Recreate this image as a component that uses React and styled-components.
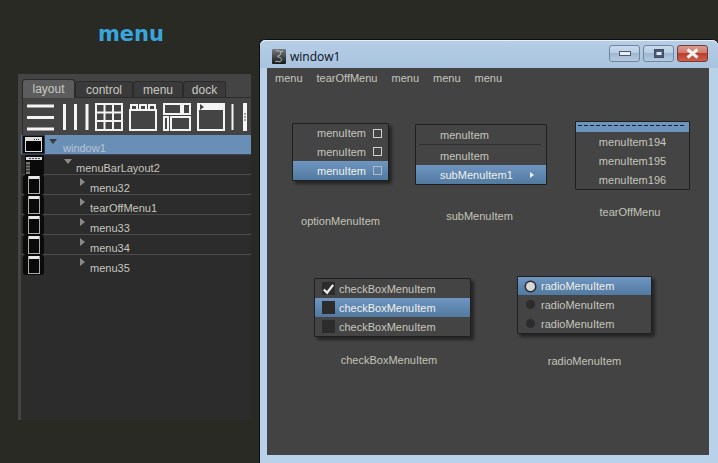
import React from 'react';
import styled, { createGlobalStyle } from 'styled-components';

const GlobalStyle = createGlobalStyle`
  html, body {
    margin: 0;
    padding: 0;
    background: #2a2a25;
    overflow: hidden;
  }
`;

const uiFont = `"Liberation Sans", Arial, sans-serif`;

export default function App() {
  return (
    <>
      <GlobalStyle />
      <Page>
        <LeftColumn>
          <Title>menu</Title>
          <Panel>
            <PanelHead>
              <Tabs>
                <Tab $active>layout</Tab>
                <Tab $w={58}>control</Tab>
                <Tab $w={50}>menu</Tab>
                <Tab $w={43}>dock</Tab>
              </Tabs>
              <Toolbar>
                <ToolRows />
                <ToolColumns />
                <ToolGrid />
                <ToolTabs />
                <ToolForm />
                <ToolFrame />
                <ToolPane />
              </Toolbar>
            </PanelHead>
            <Tree>
              <TreeRow $selected>
                <WindowIcon />
                <Arrow $open $x={4} $after={6} $dark />
                <TreeLabel $dim>window1</TreeLabel>
              </TreeRow>
              <TreeRow>
                <MenuBarIcon />
                <Arrow $open $x={19} $after={4} />
                <TreeLabel>menuBarLayout2</TreeLabel>
              </TreeRow>
              {['menu32', 'tearOffMenu1', 'menu33', 'menu34', 'menu35'].map((name, i) => (
                <TreeRow key={name} $last={i === 4}>
                  <MenuIcon />
                  <Arrow $x={35} $after={5} />
                  <TreeLabel>{name}</TreeLabel>
                </TreeRow>
              ))}
            </Tree>
          </Panel>
        </LeftColumn>

        <Window>
          <TitleBar>
            <AppIcon />
            <WindowTitle>window1</WindowTitle>
            <Controls>
              <Control>
                <svg width="12" height="6" viewBox="0 0 12 6">
                  <rect x="0.5" y="0.5" width="11" height="4" fill="#e8eef5" stroke="#4a5a72" />
                </svg>
              </Control>
              <Control>
                <svg width="12" height="10" viewBox="0 0 12 10">
                  <rect x="1.5" y="0.5" width="9" height="8" fill="#4a5a78" stroke="#3c4a62" />
                  <rect x="3.5" y="3" width="5" height="3" fill="#dfe7f0" />
                </svg>
              </Control>
              <Control $close>
                <svg width="15" height="11" viewBox="0 0 15 11">
                  <path d="M2.5 1.5 L12.5 9.5 M12.5 1.5 L2.5 9.5" stroke="#f2f2f2" strokeWidth="3" />
                </svg>
              </Control>
            </Controls>
          </TitleBar>
          <Client>
            <MenuBar>
              <MenuBarItem>menu</MenuBarItem>
              <MenuBarItem>tearOffMenu</MenuBarItem>
              <MenuBarItem>menu</MenuBarItem>
              <MenuBarItem>menu</MenuBarItem>
              <MenuBarItem>menu</MenuBarItem>
            </MenuBar>

            <DemoRow $top={35}>
              <Demo $w={97} $left={25} $gap={33}>
                <Popup>
                  <OptionItem>menuItem<OptionBox /></OptionItem>
                  <OptionItem>menuItem<OptionBox /></OptionItem>
                  <OptionItem $on>menuItem<OptionBox $faded /></OptionItem>
                </Popup>
                <Caption>optionMenuItem</Caption>
              </Demo>
              <Demo $w={132} $left={26} $gap={24} $down={1} $nudge={3}>
                <Popup $flat>
                  <SubItem>menuItem</SubItem>
                  <Divider />
                  <SubItem>menuItem</SubItem>
                  <SubItem $on>
                    subMenuItem1
                    <SubArrow />
                  </SubItem>
                </Popup>
                <Caption>subMenuItem</Caption>
              </Demo>
              <Demo $w={115} $left={28} $gap={15} $down={-2} $nudge={5}>
                <Popup $flat>
                  <TearStrip />
                  <TearItem>menuItem194</TearItem>
                  <TearItem>menuItem195</TearItem>
                  <TearItem>menuItem196</TearItem>
                </Popup>
                <Caption>tearOffMenu</Caption>
              </Demo>
            </DemoRow>

            <DemoRow $top={48}>
              <Demo $w={157} $left={47} $gap={16} $down={2} $nudge={7}>
                <Popup>
                  <CheckItem>
                    <CheckBox>
                      <svg width="14" height="12" viewBox="0 0 14 12">
                        <path d="M2 6.5 L5.5 10 L12 1.5" fill="none" stroke="#eee" strokeWidth="2.4" />
                      </svg>
                    </CheckBox>
                    checkBoxMenuItem
                  </CheckItem>
                  <CheckItem $on><CheckBox />checkBoxMenuItem</CheckItem>
                  <CheckItem><CheckBox />checkBoxMenuItem</CheckItem>
                </Popup>
                <Caption>checkBoxMenuItem</Caption>
              </Demo>
              <Demo $w={135} $left={46} $gap={20}>
                <Popup>
                  <RadioItem $on><RadioDot $checked />radioMenuItem</RadioItem>
                  <RadioItem><RadioDot />radioMenuItem</RadioItem>
                  <RadioItem><RadioDot />radioMenuItem</RadioItem>
                </Popup>
                <Caption>radioMenuItem</Caption>
              </Demo>
            </DemoRow>
          </Client>
        </Window>
      </Page>
    </>
  );
}

/* toolbar drawings */
const ToolSvg = ({ w, children }) => (
  <svg width={w} height="28" viewBox={`0 0 ${w} 28`} fill="none" stroke="#f4f4f4" strokeWidth="2">
    {children}
  </svg>
);

const ToolRows = () => (
  <ToolSvg w={29}>
    <path d="M0 3 H27 M0 14.5 H27 M0 26 H27" strokeWidth="3" />
  </ToolSvg>
);

const ToolColumns = () => (
  <ToolSvg w={27}>
    <path d="M2.5 1 V27 M13.5 1 V27 M25 1 V27" strokeWidth="3" />
  </ToolSvg>
);

const ToolGrid = () => (
  <ToolSvg w={28}>
    <rect x="1" y="1" width="26" height="26" />
    <path d="M1 9.5 H27 M1 18 H27 M9.5 1 V27 M18 1 V27" />
  </ToolSvg>
);

const ToolTabs = () => (
  <ToolSvg w={28}>
    <rect x="1" y="7" width="26" height="20" />
    <path d="M2 7 V2 H8 V7 M11 7 V2 H17 V7 M20 7 V2 H26 V7" />
  </ToolSvg>
);

const ToolForm = () => (
  <ToolSvg w={28}>
    <rect x="1" y="1" width="17" height="10" />
    <rect x="20" y="1" width="7" height="10" />
    <rect x="1" y="14" width="4" height="13" />
    <rect x="8" y="14" width="19" height="13" />
  </ToolSvg>
);

const ToolFrame = () => (
  <ToolSvg w={28}>
    <rect x="1" y="1" width="26" height="26" />
    <path d="M1 0 H28 V7 H1 Z" fill="#f4f4f4" stroke="none" />
    <path d="M3 1 L7 4 L3 7 Z" fill="#444" stroke="none" />
  </ToolSvg>
);

const ToolPane = () => (
  <ToolSvg w={20}>
    <path d="M1.5 1 V27" strokeWidth="2" />
    <rect x="12" y="0" width="4" height="28" fill="#f4f4f4" stroke="none" />
    <path d="M13 11 H15 M13 14 H15 M13 17 H15" stroke="#555" strokeWidth="1" />
  </ToolSvg>
);

/* tree icons */
const WindowIcon = () => (
  <TreeIcon>
    <svg width="24" height="19" viewBox="0 0 24 19">
      <rect x="1" y="0" width="23" height="19" fill="#0a0a0a" stroke="#50627a" />
      <rect x="4.5" y="2.5" width="16" height="14" fill="#000" stroke="#ddd" />
      <rect x="5" y="3" width="15" height="3" fill="#ddd" />
      <path d="M13 4.5 H19" stroke="#333" strokeDasharray="1 1" />
    </svg>
  </TreeIcon>
);

const MenuBarIcon = () => (
  <TreeIcon>
    <svg width="24" height="20" viewBox="0 0 24 20">
      <rect x="4" y="0" width="19" height="20" rx="1" fill="#0a0a0a" />
      <rect x="5" y="2" width="16" height="3" fill="#ddd" />
      <path d="M8 3.5 H19" stroke="#444" strokeDasharray="2 1" />
      <rect x="5" y="7" width="4" height="12" fill="#777" />
      <path d="M5 10 H9 M5 13 H9 M5 16 H9" stroke="#111" />
    </svg>
  </TreeIcon>
);

const MenuIcon = () => (
  <TreeIcon>
    <svg width="24" height="20" viewBox="0 0 24 20">
      <rect x="2" y="0" width="21" height="20" rx="3" fill="#0a0a0a" />
      <rect x="7.5" y="1.5" width="11" height="17" fill="none" stroke="#aaa" />
      <rect x="8" y="1" width="10" height="3" fill="#e6e6e6" />
    </svg>
  </TreeIcon>
);

const AppIcon = () => (
  <svg width="14" height="15" viewBox="0 0 14 15">
    <defs>
      <linearGradient id="appIcon" x1="0" y1="0" x2="0" y2="1">
        <stop offset="0" stopColor="#777c80" />
        <stop offset="1" stopColor="#16181a" />
      </linearGradient>
    </defs>
    <rect width="14" height="15" rx="1" fill="url(#appIcon)" />
    <path d="M4 2 C8 1 10 4 8 6 C7 7 5 6 6 8 C8 8 11 10 9 12 C8 13 6 13 5 12 M8 3 L11 2 M5 12 L3 13" fill="none" stroke="#c8c8c8" strokeWidth="0.9" />
  </svg>
);

/* page */
const Page = styled.div`
  display: flex;
  width: 718px;
  height: 463px;
  overflow: hidden;
  font-family: ${uiFont};
`;

const LeftColumn = styled.div`
  display: flex;
  flex-direction: column;
  flex: none;
  width: 259px;
  padding-left: 18px;
  box-sizing: border-box;
`;

const Title = styled.h1`
  margin: 22px 0 0;
  width: 226px;
  height: 52px;
  font-size: 21px;
  line-height: 24px;
  font-weight: 700;
  color: #38a6dc;
  text-align: center;
  font-family: "DejaVu Sans", sans-serif;
`;

const Panel = styled.section`
  width: 233px;
  height: 346px;
  background: #2c2c2c;
  border-left: 3px solid #454545;
  box-sizing: border-box;
`;

const PanelHead = styled.div`
  background: #444;
  height: 61px;
  padding-top: 5px;
  box-sizing: border-box;
`;

const Tabs = styled.div`
  display: flex;
  align-items: flex-end;
  height: 18px;
  padding-left: 1px;
  border-bottom: 1px solid #2b2b2b;
`;

const Tab = styled.div`
  width: ${p => (p.$active ? 53 : p.$w)}px;
  height: ${p => (p.$active ? 19 : 16)}px;
  margin-bottom: ${p => (p.$active ? -1 : 0)}px;
  box-sizing: border-box;
  display: flex;
  align-items: center;
  justify-content: center;
  font-size: 12px;
  color: #c9c9c2;
  background: ${p => (p.$active ? '#5c5c5c' : '#3a3a3a')};
  border: 1px solid #2b2b2b;
  border-bottom: none;
  border-radius: 3px 3px 0 0;
`;

const Toolbar = styled.div`
  display: flex;
  align-items: center;
  gap: 6px;
  height: 37px;
  padding: 4px 0 3px 4px;
  box-sizing: border-box;
  border-left: 1px solid #2b2b2b;
  margin-left: 1px;
`;

const Tree = styled.div`
  display: flex;
  flex-direction: column;
`;

const TreeRow = styled.div`
  display: flex;
  align-items: center;
  height: 20px;
  box-sizing: border-box;
  background: ${p => (p.$selected ? '#6a8fb7' : 'transparent')};
  border-bottom: 1px solid ${p => (p.$last ? 'transparent' : p.$selected ? '#3b4654' : '#4b4b4b')};
`;

const TreeIcon = styled.span`
  display: flex;
  flex: none;
  width: 24px;
`;

const Arrow = styled.span`
  flex: none;
  margin-left: ${p => p.$x}px;
  margin-right: ${p => p.$after}px;
  margin-top: -6px;
  width: 0;
  height: 0;
  ${p =>
    p.$open
      ? `border-left: 4px solid transparent;
         border-right: 4px solid transparent;
         border-top: 5px solid ${p.$dark ? '#3a3a3a' : '#8a8a8a'};`
      : `border-top: 4px solid transparent;
         border-bottom: 4px solid transparent;
         border-left: 5px solid #8a8a8a;`}
`;

const TreeLabel = styled.span`
  font-size: 11px;
  padding-top: 7px;
  color: ${p => (p.$dim ? '#b9c4d2' : '#c6c6be')};
  white-space: nowrap;
`;

/* window */
const Window = styled.section`
  flex: none;
  width: 459px;
  height: 424px;
  margin-top: 39px;
  box-sizing: border-box;
  padding: 0 9px 8px 7px;
  background: #b9d2ea;
  border: 1px solid #0e0e0e;
  border-bottom: none;
  border-right: none;
  border-radius: 6px 6px 0 0;
  display: flex;
  flex-direction: column;
`;

const TitleBar = styled.header`
  display: flex;
  align-items: center;
  flex: none;
  height: 28px;
  margin: 0 -9px 0 -7px;
  padding: 4px 10px 0 12px;
  box-sizing: border-box;
  background: linear-gradient(to bottom, #b6cee6, #a9c3de);
  border-radius: 6px 6px 0 0;
  box-shadow: inset 0 1px 0 #e6f0fa;
`;

const WindowTitle = styled.span`
  margin-left: 4px;
  font-family: "Open Sans", "Liberation Sans", sans-serif;
  font-size: 12px;
  color: #0a0f18;
`;

const Controls = styled.div`
  display: flex;
  gap: 3px;
  margin-left: auto;
  margin-top: -5px;
`;

const Control = styled.button`
  display: flex;
  align-items: center;
  justify-content: center;
  width: 31px;
  height: 17px;
  padding: 0;
  border: 1px solid ${p => (p.$close ? '#7a3a36' : '#71849c')};
  border-radius: 3px;
  background: ${p =>
    p.$close
      ? 'linear-gradient(to bottom, #d99a8e 0%, #cf7a6c 45%, #bb3f2c 50%, #c9604e 100%)'
      : 'linear-gradient(to bottom, #c8dbec 0%, #b8cee3 45%, #9fb8d2 50%, #b4cbe1 100%)'};
`;

const Client = styled.div`
  flex: 1;
  background: #434343;
  color: #c6c6be;
`;

const MenuBar = styled.nav`
  display: flex;
  height: 20px;
  padding-left: 8px;
  align-items: center;
`;

const MenuBarItem = styled.span`
  font-size: 11px;
  margin-right: 14px;
`;

const DemoRow = styled.div`
  display: flex;
  align-items: flex-start;
  margin-top: ${p => p.$top}px;
`;

const Caption = styled.p`
  margin: 0;
  height: 14px;
  line-height: 14px;
  font-size: 11px;
  text-align: center;
  color: #c4c4b8;
  white-space: nowrap;
`;

const Demo = styled.div`
  flex: none;
  width: ${p => p.$w}px;
  margin-left: ${p => p.$left}px;
  margin-top: ${p => p.$down || 0}px;
  display: flex;
  flex-direction: column;

  ${Caption} {
    margin-top: ${p => p.$gap}px;
    padding-right: ${p => p.$nudge || 0}px;
  }
`;

const Popup = styled.div`
  box-sizing: border-box;
  background: #444;
  border: 1px solid #1f1f1f;
  box-shadow: ${p => (p.$flat ? 'none' : '3px 3px 3px rgba(0, 0, 0, 0.45)')};
  border-radius: 1px;
`;

const highlight = `background: linear-gradient(to bottom, #6e96c1, #52799f); color: #f0f0ea;`;

const OptionItem = styled.div`
  display: flex;
  align-items: center;
  justify-content: flex-end;
  height: 19px;
  padding-right: 6px;
  font-size: 11px;
  ${p => p.$on && highlight}

  &:first-child {
    height: 18px;
  }
`;

const OptionBox = styled.span`
  width: 7px;
  height: 7px;
  margin-left: 7px;
  border: 1px solid ${p => (p.$faded ? '#b0b8c0' : '#d0d0d0')};
`;

const SubItem = styled.div`
  display: flex;
  align-items: center;
  height: 19px;
  padding-left: 24px;
  font-size: 11px;
  ${p => p.$on && highlight}
`;

const Divider = styled.div`
  height: 1px;
  margin: 0 5px 1px 3px;
  background: #2f2f2f;
`;

const SubArrow = styled.span`
  margin-left: auto;
  margin-right: 12px;
  width: 0;
  height: 0;
  border-top: 3px solid transparent;
  border-bottom: 3px solid transparent;
  border-left: 4px solid #eee;
`;

const TearStrip = styled.div`
  position: relative;
  height: 10px;
  background: #6d94bd;

  &::after {
    content: '';
    position: absolute;
    left: 2px;
    right: 4px;
    top: 3px;
    height: 1px;
    background: repeating-linear-gradient(to right, #16202c 0 4px, transparent 4px 6px);
  }
`;

const TearItem = styled.div`
  display: flex;
  align-items: center;
  justify-content: center;
  height: 19px;
  font-size: 11px;
`;

const CheckItem = styled.div`
  display: flex;
  align-items: center;
  height: 19px;
  padding-left: 7px;
  font-size: 11px;
  ${p => p.$on && highlight}
`;

const CheckBox = styled.span`
  display: flex;
  align-items: center;
  justify-content: center;
  width: 13px;
  height: 13px;
  margin-right: 4px;
  background: #2c2c2c;
`;

const RadioItem = styled.div`
  display: flex;
  align-items: center;
  height: 19px;
  padding-left: 8px;
  font-size: 11px;
  ${p => p.$on && highlight}

  &:first-child {
    height: 18px;
  }
`;

const RadioDot = styled.span`
  width: 9px;
  height: 9px;
  margin-right: 6px;
  border-radius: 50%;
  background: ${p => (p.$checked ? '#d8d8d8' : '#2c2c2c')};
  box-shadow: ${p => (p.$checked ? '0 0 0 1.5px #2a2a2a' : 'none')};
`;
